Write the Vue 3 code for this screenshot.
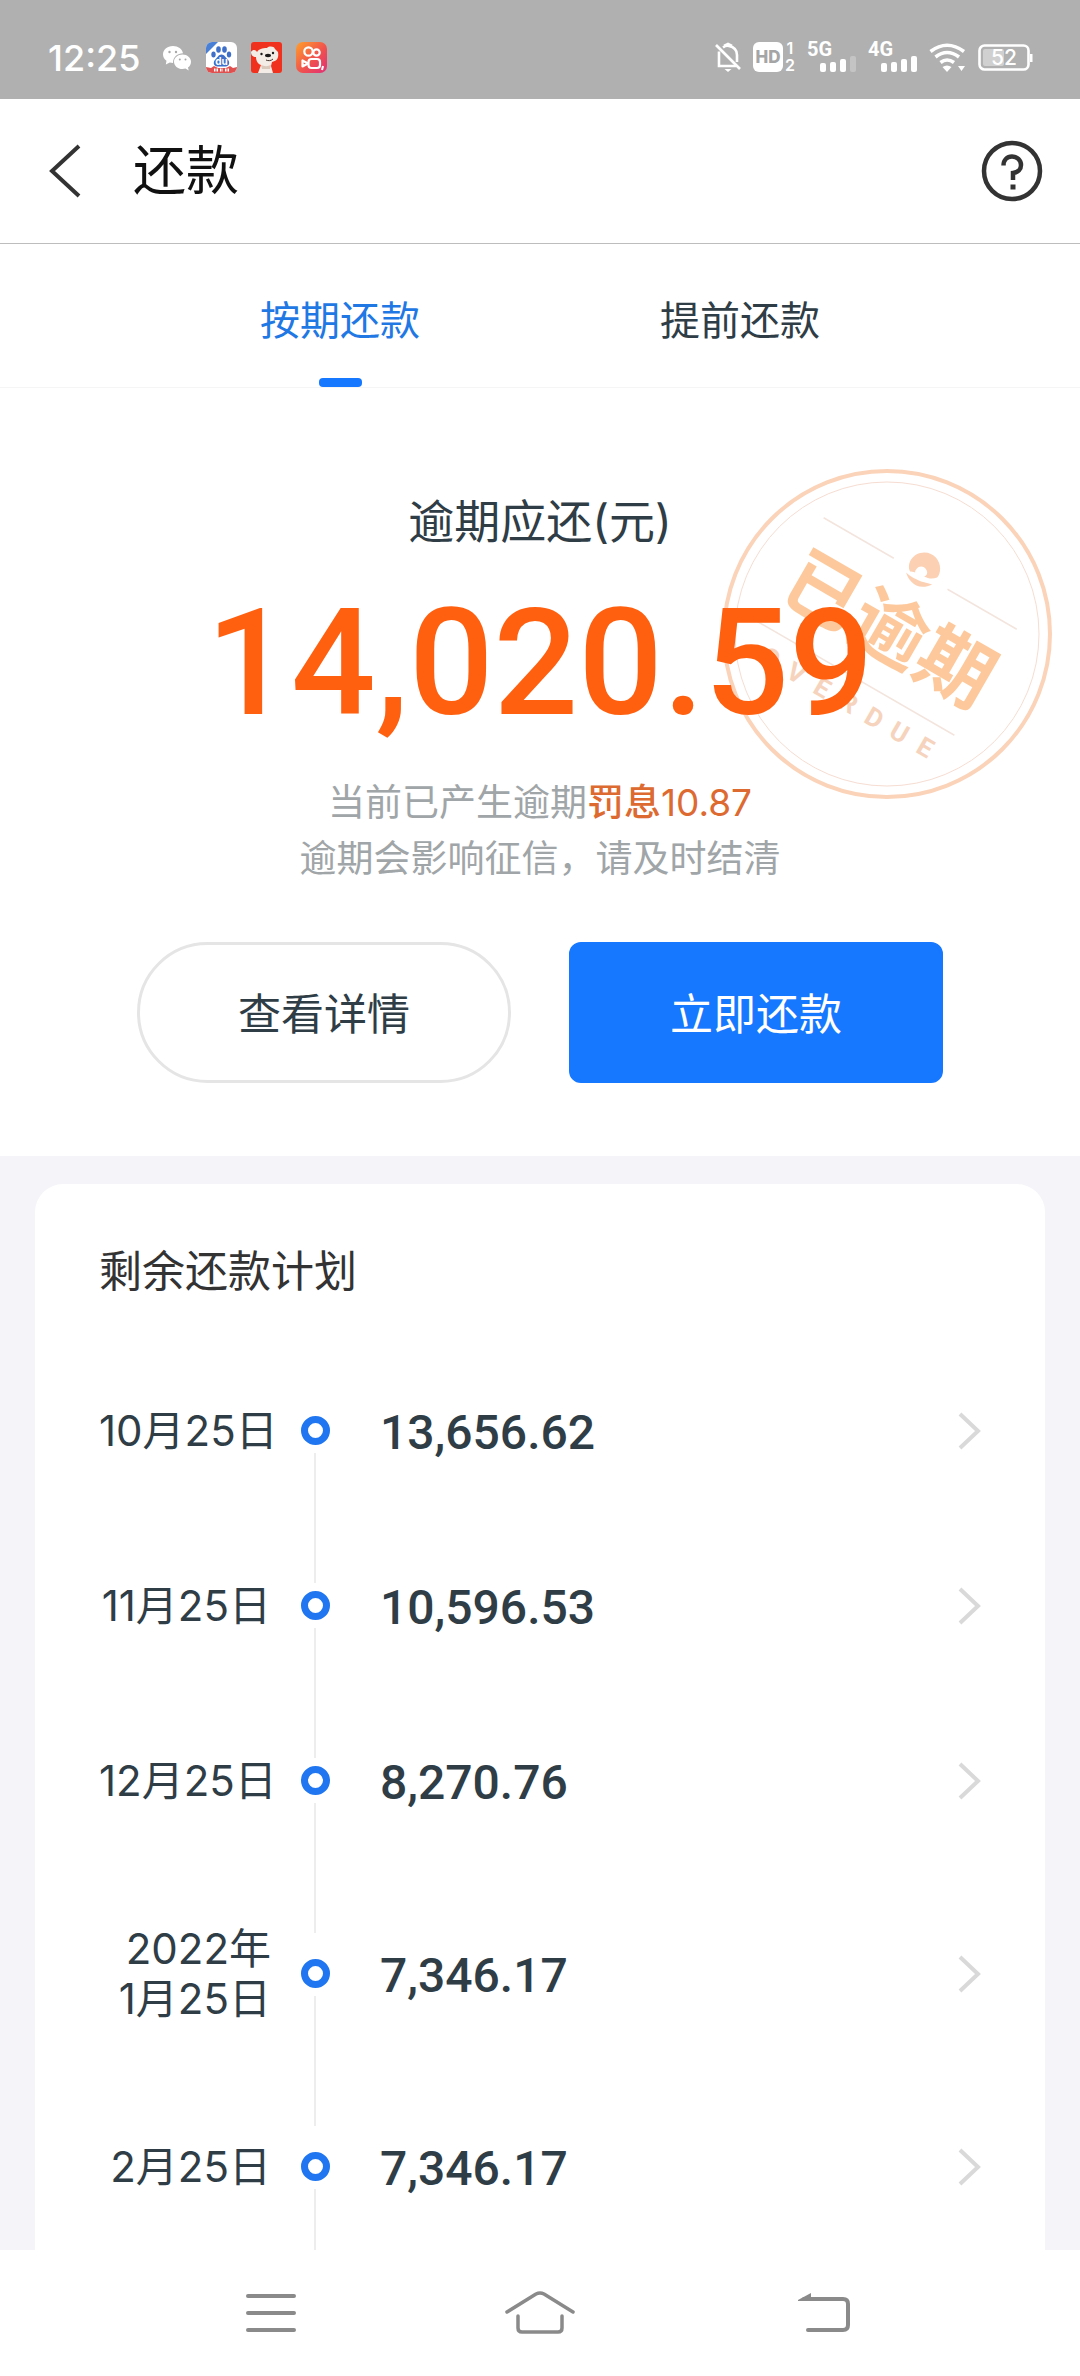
<script setup>
const plan = [
  { date: ['10月25日'], amount: '13,656.62' },
  { date: ['11月25日'], amount: '10,596.53' },
  { date: ['12月25日'], amount: '8,270.76' },
  { date: ['2022年', '1月25日'], amount: '7,346.17', spaced: true },
  { date: ['2月25日'], amount: '7,346.17', spaced: true },
]
</script>

<template>
  <div class="page">
    <div class="status">
      <span class="clock">12:25</span>
      <div class="apps">
        <svg width="30" height="30" viewBox="0 0 30 30">
          <path fill="#fff" d="M11 3C5 3 1 6.900 1 11.500c0 2.600 1.300 4.800 3.500 6.300L3.800 21.500l4-2c1 .3 2 .4 3.200.4 0-6 4.500-9.600 10-9.600C20.300 6 16 3 11 3z" />
          <path fill="#fff" d="M20.500 11.500c-4.800 0-8.500 3.300-8.500 7.300s3.700 7.300 8.500 7.300c1 0 2-.2 3-.5l3.200 2-.7-3c1.900-1.400 3-3.400 3-5.800 0-4-3.700-7.300-8.500-7.300z" />
          <g fill="#a8a8a8"><circle cx="7.500" cy="9" r="1.200" /><circle cx="14" cy="9" r="1.200" /><circle cx="17.800" cy="16.500" r="1" /><circle cx="23.500" cy="16.500" r="1" /></g>
        </svg>
        <svg width="31" height="31" viewBox="0 0 31 31">
          <defs><clipPath id="du"><rect width="31" height="31" rx="6" /></clipPath></defs>
          <g clip-path="url(#du)">
            <rect width="31" height="31" fill="#fff" />
            <path d="M0 0h12L0 12z" fill="#4a7fd6" />
            <path d="M0 25l5 1 3-2 4 2h8l4-2 3 2 4-1v6H0z" fill="#e0504e" />
            <g fill="#3e6fc9">
              <ellipse cx="12.500" cy="7.500" rx="2.300" ry="3.200" /><ellipse cx="18.500" cy="7.500" rx="2.300" ry="3.200" />
              <ellipse cx="7.500" cy="12.500" rx="2.200" ry="3" /><ellipse cx="23" cy="12.500" rx="2.200" ry="3" />
              <path d="M15.500 12.500c-3 0-4 3-6 4.700-2.600 2.300-2.400 7 2 7.300h8c4.400-.3 4.600-5 2-7.300-2-1.700-3-4.700-6-4.700z" />
            </g>
            <text x="15.500" y="22.500" text-anchor="middle" font-size="10" font-weight="700" fill="#fff">du</text>
            <path d="M8 28h4M14 28h3M19 28h4" stroke="#fff" stroke-width="3" stroke-dasharray="1.500 1" />
          </g>
        </svg>
        <svg width="31" height="31" viewBox="0 0 31 31">
          <rect width="31" height="31" rx="3" fill="#f0311d" />
          <path d="M0 10c2-3 5-2 6 0 2-3 5-4 10-4 2-2 7-2 8 1l3 3c1 6-1 9-6 10l-1 4 2 7H7l3-8c-3-1-5-4-5-8-3 0-5-2-5-5z" fill="#f3ece6" />
          <path d="M10 23c3 1.500 7 1.500 10 0l-1 4h-8z" fill="#d9c8bc" />
          <ellipse cx="17" cy="13.500" rx="3" ry="1.700" fill="#1c1c1c" />
          <circle cx="10.500" cy="12" r="1.200" fill="#1c1c1c" /><circle cx="22" cy="11" r="1.200" fill="#1c1c1c" />
          <path d="M15 18c2 1 5 1 7-1" fill="none" stroke="#44312b" stroke-width="1" />
        </svg>
        <svg width="31" height="31" viewBox="0 0 31 31">
          <defs><linearGradient id="ks" x1="0" y1="0" x2="1" y2="1"><stop offset="0" stop-color="#ffa02a" /><stop offset=".55" stop-color="#f0524d" /><stop offset="1" stop-color="#e02f78" /></linearGradient></defs>
          <rect width="31" height="31" rx="7" fill="url(#ks)" />
          <g fill="none" stroke="#fff" stroke-width="2.200" stroke-linejoin="round">
            <circle cx="12.500" cy="9.500" r="4.200" /><circle cx="20.500" cy="10.500" r="3.200" />
            <rect x="12.500" y="17" width="11.500" height="9" rx="3" /><path d="M12 21.500L6.500 18.500v6z" />
          </g>
          <path d="M27 24l-1 4" stroke="#fff" stroke-width="2" />
        </svg>
      </div>
      <div class="signals">
        <svg width="28" height="31" viewBox="0 0 28 31" fill="none" stroke="#fff" stroke-width="2.600">
          <path d="M5 9.500V24H22M9 5.500C11 4 13 3.500 15 4c5 1 8 4.500 8 9v7M10 4l4-2 4 2" />
          <path d="M2 3l24 24" />
          <path d="M10.500 27h7l-3.500 3z" fill="#fff" stroke="none" />
        </svg>
        <svg width="43" height="43" viewBox="0 -6 43 43">
          <rect width="30" height="30" rx="6" fill="#fff" />
          <text x="15" y="21" text-anchor="middle" font-size="17" font-weight="800" fill="#a5a5a5">HD</text>
          <text x="37" y="12" text-anchor="middle" font-size="16" font-weight="600" fill="#fff">1</text>
          <text x="37" y="29" text-anchor="middle" font-size="16" font-weight="600" fill="#fff">2</text>
        </svg>
        <svg width="50" height="43" viewBox="0 -6 50 43" fill="#fff">
          <text class="net" x="0" y="14">5G</text>
          <rect x="13" y="21" width="6" height="9" rx="2" /><rect x="23" y="20" width="6" height="10" rx="2" /><rect x="33" y="17" width="6" height="13" rx="2" /><rect x="43" y="14" width="6" height="16" rx="2" fill="#c4c4c4" />
        </svg>
        <svg width="50" height="43" viewBox="0 -6 50 43" fill="#fff">
          <text class="net" x="0" y="14">4G</text>
          <rect x="13" y="21" width="6" height="9" rx="2" /><rect x="23" y="20" width="6" height="10" rx="2" /><rect x="33" y="17" width="6" height="13" rx="2" /><rect x="43" y="14" width="6" height="16" rx="2" />
        </svg>
        <svg width="38" height="31" viewBox="0 0 38 31">
          <g fill="none" stroke="#fff" stroke-width="3.600"><path d="M1.500 9.500Q18 -3 35 9.500" /><path d="M6.500 15Q18 6 30 15" /><path d="M11.500 20.500Q18 15.500 25 20.500" /></g>
          <path d="M13.500 25q4.500-3 9 0L18 30zM29 24h7l-3.500 5z" fill="#fff" />
        </svg>
        <svg width="55" height="29" viewBox="0 0 55 29">
          <rect x="1.500" y="2.500" width="49" height="24" rx="5" fill="none" stroke="#fff" stroke-width="2.600" />
          <rect x="5" y="6" width="21" height="17" rx="2" fill="#d0d0d0" />
          <rect x="52" y="11" width="2.500" height="8" fill="#fff" />
          <text x="26" y="22" text-anchor="middle" font-size="21" font-weight="500" fill="#fff">52</text>
        </svg>
      </div>
    </div>

    <header class="header">
      <button class="icon-btn" aria-label="返回">
        <svg width="34" height="54" viewBox="0 0 34 54"><path d="M31 2L4 27l27 25" fill="none" stroke="#333" stroke-width="4" /></svg>
      </button>
      <h1>还款</h1>
      <button class="icon-btn help" aria-label="帮助">
        <svg width="62" height="62" viewBox="0 0 62 62" fill="none" stroke="#333">
          <circle cx="31" cy="31" r="28" stroke-width="4.500" />
          <path d="M22.500 25.500c0-5.500 3.500-9 8.500-9s9 3.500 9 8.500c0 4.500-3 7.500-8 8v7" stroke-width="4.500" />
          <path d="M32 44.500v5" stroke-width="5" />
        </svg>
      </button>
    </header>

    <nav class="tabs">
      <a href="#" class="tab active">按期还款</a>
      <a href="#" class="tab">提前还款</a>
    </nav>

    <section class="summary">
      <svg class="stamp" width="332" height="332" viewBox="-166 -166 332 332">
        <circle r="163" fill="none" stroke="#fbd3b9" stroke-width="4" />
        <circle r="152" fill="none" stroke="#f6ddd2" stroke-width="1" />
        <g transform="rotate(30)">
          <path d="M-113-69h81M30-69h80M-118 54h227" stroke="#f3e5de" stroke-width="1.500" />
          <g transform="translate(-1 -74) rotate(-30)" fill="#fcd0b2">
            <path d="M-13 2C-17-6-10-17 1-17 11-17 17-9 17-1c0 3-1 7-3 9-5 2-9 1-13-1 3-1 4-4 2-7-2-4-8-4-10 0-1 1-1 2-1 3-2-1-4-1-5-1z" />
            <path d="M-17 3c5 5 11 7 15 9 4 1 8 2 11 3-8 4-16 3-21-3-3-3-4-6-5-9z" />
          </g>
          <text class="stamp-cn" text-anchor="middle" y="22">已逾期</text>
          <text class="stamp-en" text-anchor="middle" x="-89 -59 -29 1 31 60 90" y="88">OVERDUE</text>
        </g>
      </svg>
      <p class="label">逾期应还(元)</p>
      <p class="total">14,020.59</p>
      <p class="note">当前已产生逾期<em><b>罚息</b>10.87</em><br />逾期会影响征信，请及时结清</p>
      <div class="actions">
        <button class="btn outline">查看详情</button>
        <button class="btn primary">立即还款</button>
      </div>
    </section>

    <main class="plan-wrap">
      <section class="plan">
        <h2>剩余还款计划</h2>
        <ul>
          <li v-for="item in plan" :key="item.date.join('')" :class="{ spaced: item.spaced }">
            <a href="#" class="head">
              <span class="date"><span v-for="part in item.date" :key="part">{{ part }}</span></span>
              <i class="dot"></i>
              <span class="amount">{{ item.amount }}</span>
              <svg width="24" height="40" viewBox="0 0 24 40"><path d="M2 3l18 17L2 37" fill="none" stroke="#d9d9d9" stroke-width="4" /></svg>
            </a>
            <i class="line"></i>
          </li>
        </ul>
      </section>
    </main>

    <footer class="sysnav">
      <button class="icon-btn" aria-label="菜单">
        <svg width="70" height="46" viewBox="0 0 70 46" stroke="#8a8a8a" stroke-width="4" stroke-linecap="round"><path d="M12 6h46M12 23h46M12 40h46" /></svg>
      </button>
      <button class="icon-btn" aria-label="主页">
        <svg width="72" height="46" viewBox="0 0 72 46" fill="none" stroke="#8a8a8a" stroke-width="3.500" stroke-linecap="round" stroke-linejoin="round"><path d="M3 22L32 4q4-2 8 0l29 18M14 26v12q0 4 4 4h36q4 0 4-4V26" /></svg>
      </button>
      <button class="icon-btn" aria-label="后退">
        <svg width="86" height="46" viewBox="-16 0 86 46" fill="none" stroke="#8a8a8a" stroke-width="4" stroke-linecap="round"><path d="M14 9h39q5 0 5 5v21q0 5-5 5H18" /><path d="M8 10L21 3v8H8z" fill="#8a8a8a" stroke="none" /></svg>
      </button>
    </footer>
  </div>
</template>

<style>
body {
  background: #fff;
}
</style>

<style scoped>
.page {
  display: flex;
  flex-direction: column;
  min-height: 100vh;
  background: #fff;
  color: #2f3d46;
  font-family: Inter, "Noto Sans CJK SC", sans-serif;
}
h1, h2, p, ul {
  margin: 0;
  padding: 0;
  font-weight: 400;
}
svg {
  display: block;
}
a {
  color: inherit;
  text-decoration: none;
}
button {
  font: inherit;
  cursor: pointer;
}
.icon-btn {
  padding: 0;
  border: 0;
  background: none;
}

.status {
  display: flex;
  align-items: center;
  box-sizing: border-box;
  height: 99px;
  padding: 16px 47px 0 48px;
  background: #b0b0b0;
}
.clock {
  color: #fff;
  font-size: 36px;
  font-weight: 500;
}
.apps {
  display: flex;
  align-items: center;
  gap: 14px;
  margin-left: 22px;
}
.signals {
  display: flex;
  align-items: center;
  gap: 11px;
  margin-left: auto;
}
.net {
  font-family: Roboto, sans-serif;
  font-size: 20px;
  font-weight: 700;
}

.header {
  display: flex;
  align-items: center;
  height: 144px;
  padding: 0 37px 0 48px;
  border-bottom: 1px solid #bdbdbd;
}
h1 {
  margin-left: 51px;
  color: #111;
  font-size: 53px;
  line-height: 60px;
}
.help {
  margin-left: auto;
}

.tabs {
  display: flex;
  padding: 0 140px;
  border-bottom: 1px solid #f5f5f5;
}
.tab {
  display: flex;
  flex: 1;
  flex-direction: column;
  align-items: center;
  padding-top: 47px;
  font-size: 40px;
  line-height: 60px;
}
.tab::after {
  width: 43px;
  height: 9px;
  margin-top: 27px;
  border-radius: 4px;
  content: "";
}
.active {
  color: #1f78e4;
}
.active::after {
  background: #1677ff;
}

.summary {
  position: relative;
  padding: 103px 0 73px;
  text-align: center;
}
.stamp {
  position: absolute;
  top: 80px;
  right: 27px;
}
.stamp-cn {
  fill: #fdc99c;
  font-size: 76px;
  font-weight: 700;
}
.stamp-en {
  fill: #f6d3bc;
  font-family: Roboto, sans-serif;
  font-size: 26px;
  font-weight: 700;
}
.label, .total, .note, .actions {
  position: relative;
}
.label {
  font-size: 46px;
  line-height: 60px;
}
.total {
  margin-top: 52px;
  color: #ff6010;
  font-family: Roboto, sans-serif;
  font-size: 149px;
  font-weight: 500;
  line-height: 120px;
}
.note {
  margin-top: 52px;
  color: #a0a5a8;
  font-size: 37px;
  line-height: 56px;
}
.note em {
  color: #dd6a30;
  font-style: normal;
}
.note b {
  font-weight: 500;
}
.actions {
  display: flex;
  gap: 58px;
  margin-top: 55px;
  padding: 0 137px;
}
.btn {
  flex: 1;
  height: 141px;
  padding: 0 0 4px;
  border: 3px solid #e5e5e5;
  background: #fff;
  color: inherit;
  font-size: 43px;
}
.outline {
  border-radius: 71px;
}
.primary {
  border-color: #1677ff;
  border-radius: 12px;
  background: #1677ff;
  color: #fff;
}

.plan-wrap {
  display: flex;
  flex: 1;
  flex-direction: column;
  padding: 28px 35px 0;
  background: #f4f4f9;
}
.plan {
  display: flex;
  flex: 1;
  flex-direction: column;
  padding: 57px 63px 0 64px;
  border-radius: 28px 28px 0 0;
  background: #fff;
}
h2 {
  color: #333;
  font-size: 43px;
  line-height: 60px;
}
ul {
  display: flex;
  flex: 1;
  flex-direction: column;
  margin-top: 107px;
  list-style: none;
}
li {
  display: flex;
  flex-direction: column;
}
.spaced {
  padding-top: 18px;
}
.head {
  display: flex;
  align-items: center;
  height: 45px;
}
.date {
  display: flex;
  flex-direction: column;
  align-items: safe flex-end;
  width: 172px;
  font-size: 42px;
  line-height: 50px;
  white-space: nowrap;
}
.dot {
  box-sizing: border-box;
  width: 29px;
  height: 29px;
  margin-left: 30px;
  border: 7px solid #1f76f0;
  border-radius: 50%;
}
.amount {
  flex: 1;
  margin-left: 50px;
  padding-top: 4px;
  font-family: Roboto, sans-serif;
  font-size: 48px;
  font-weight: 500;
}
.line {
  width: 2px;
  height: 130px;
  margin-left: 215px;
  background: #ededed;
}
li:last-child {
  flex: 1;
}
li:last-child .line {
  flex: 1;
}

.sysnav {
  display: flex;
  align-items: center;
  justify-content: space-between;
  height: 126px;
  padding: 0 220px 0 236px;
  background: #fff;
}
</style>
